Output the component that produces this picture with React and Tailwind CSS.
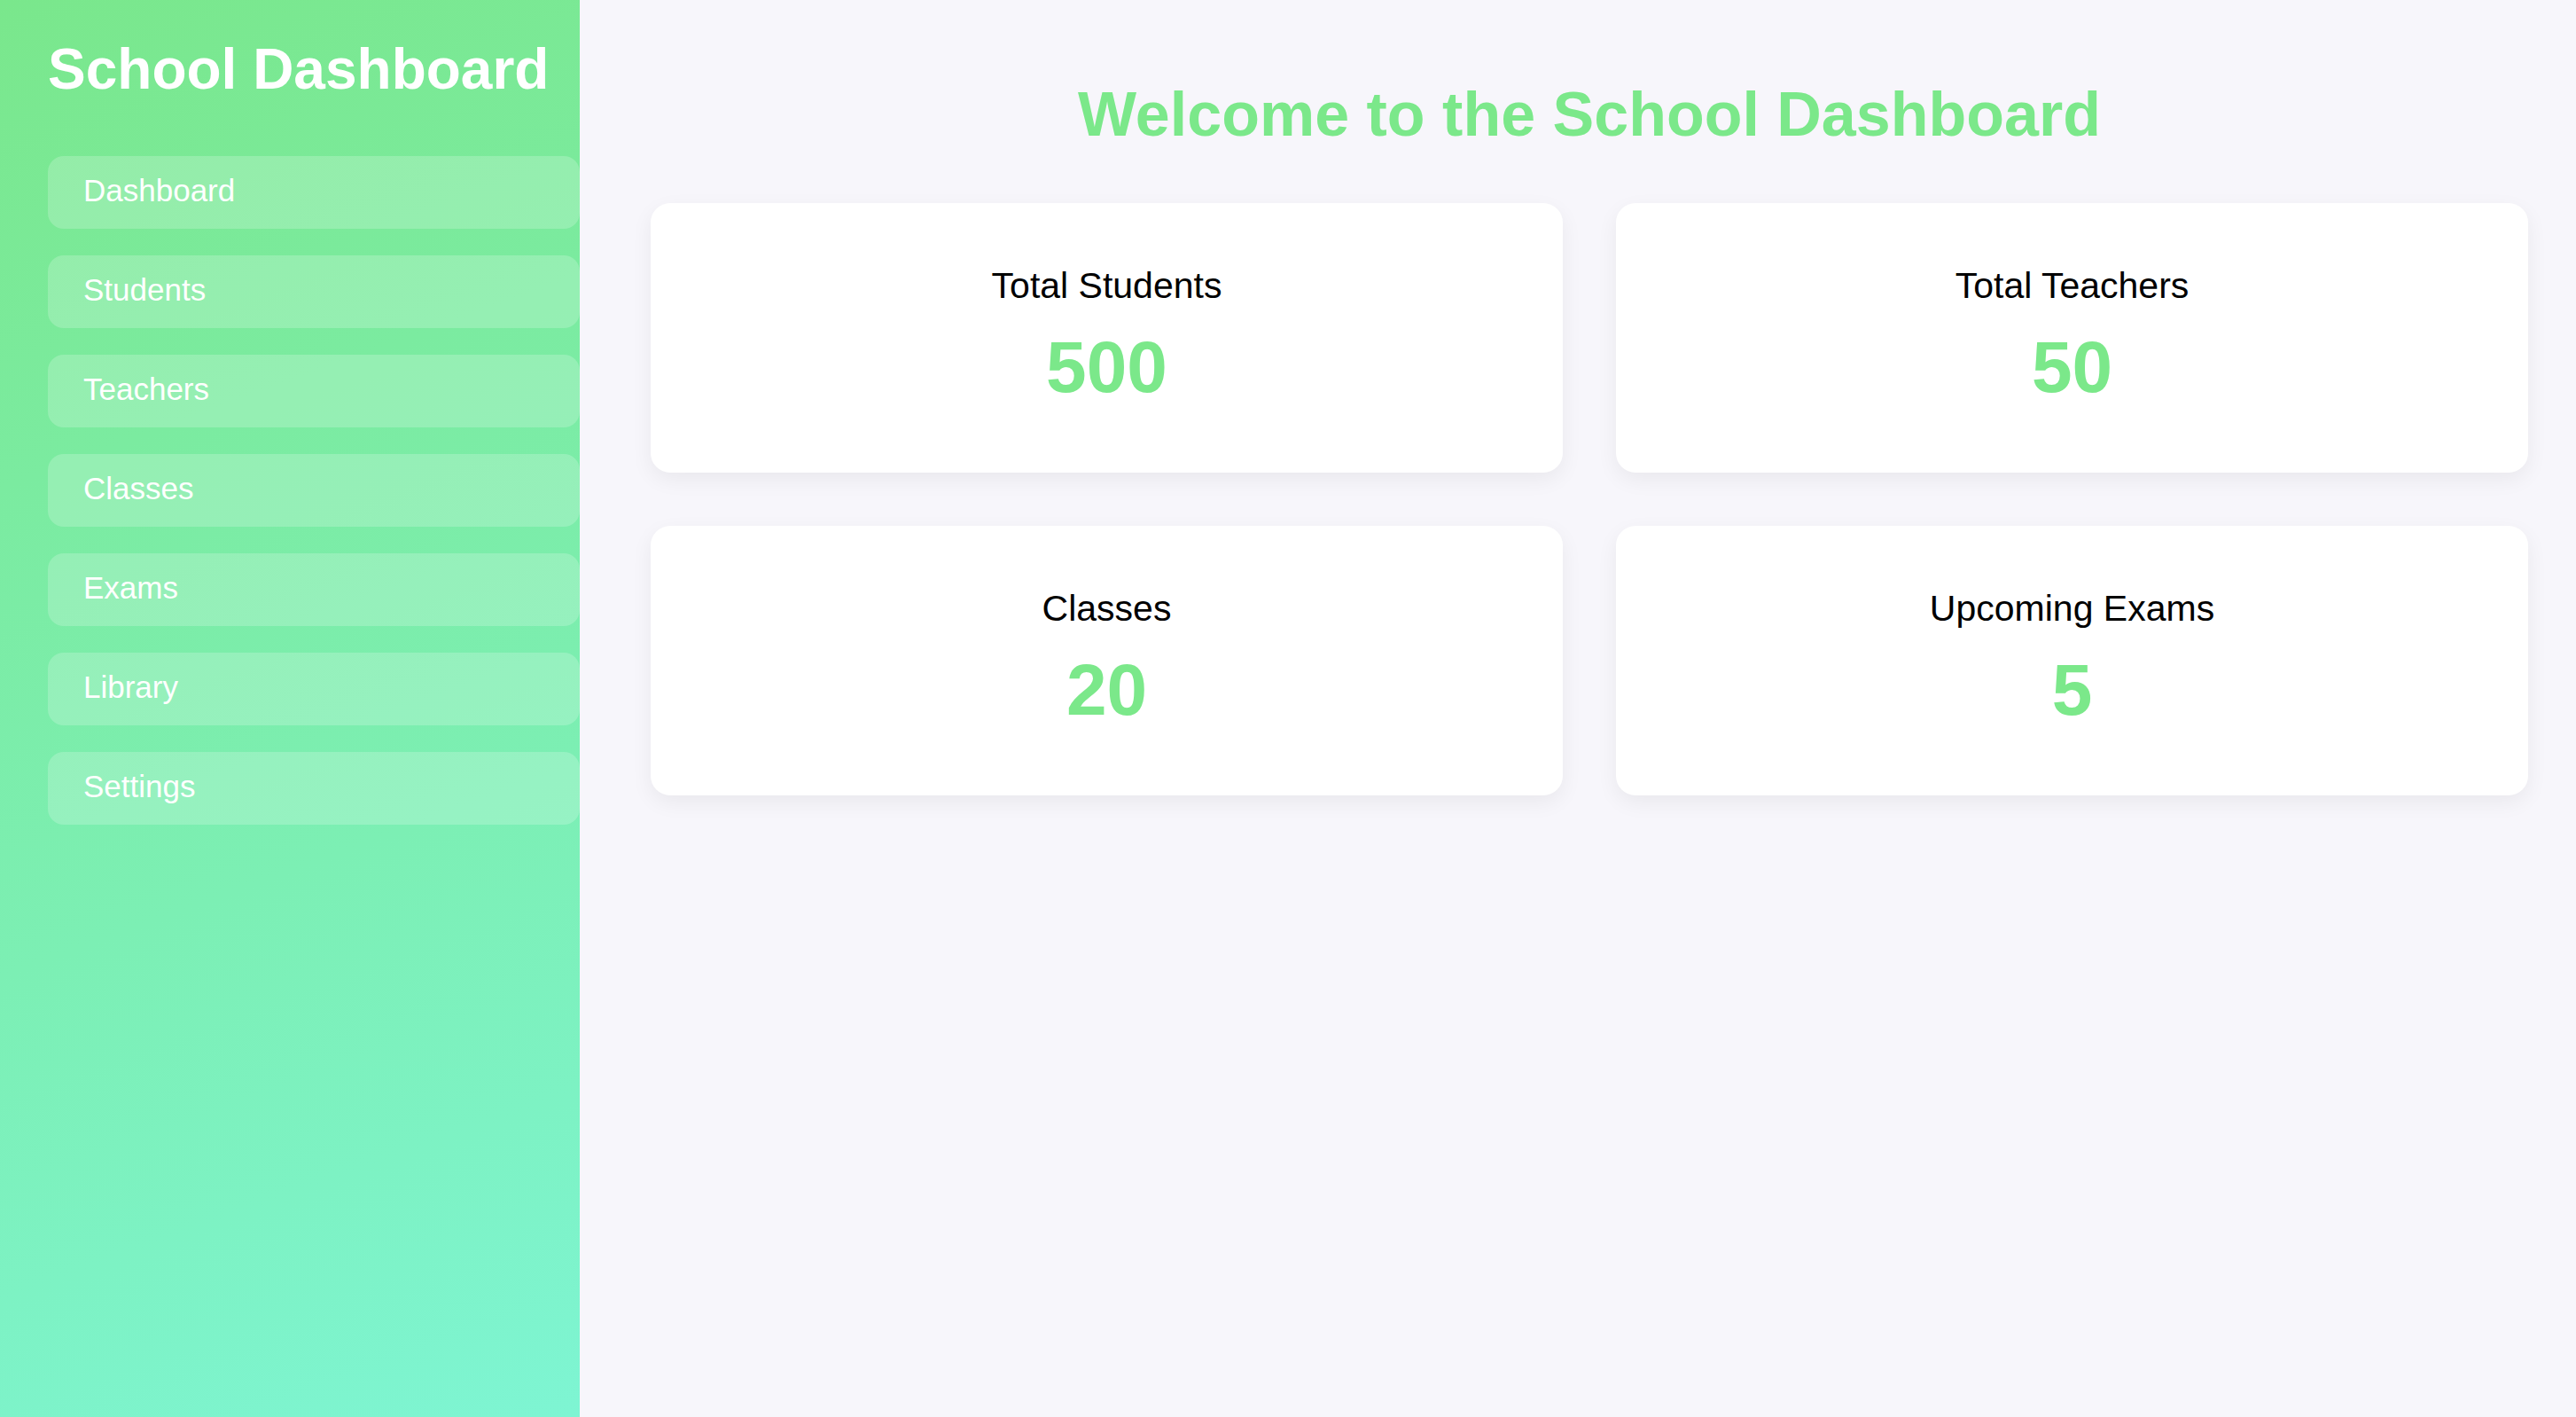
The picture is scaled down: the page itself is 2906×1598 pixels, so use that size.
const navItems = ["Dashboard", "Students", "Teachers", "Classes", "Exams", "Library", "Settings"];

const stats = [
	{ label: "Total Students", value: 500 },
	{ label: "Total Teachers", value: 50 },
	{ label: "Classes", value: 20 },
	{ label: "Upcoming Exams", value: 5 },
];

export default function App() {
	return (
		<div className="flex min-h-screen bg-[#f7f6fb] font-['Liberation_Sans',Arial,sans-serif]">
			<Sidebar/>
			<main className="flex-1 pl-[80px] pr-[54px] pt-[89px]">
				<h1 className="text-center text-[70px] leading-[81px] font-bold text-[#7be88a]">
					Welcome to the School Dashboard
				</h1>
				<div className="grid grid-cols-2 gap-[60px] mt-[59px]">
					{stats.map(s => (
						<StatCard key={s.label} {...s}/>
					))}
				</div>
			</main>
		</div>
	);
}

function Sidebar() {
	return (
		<aside className="w-[654px] shrink-0 min-h-screen pl-[54px] pt-[41px] bg-[linear-gradient(160deg,#7ae78c_0%,#7cefb4_60%,#7ef5d3_100%)]">
			<h2 className="text-[64px] leading-[74px] font-bold text-white">School Dashboard</h2>
			<nav className="flex flex-col gap-[30px] mt-[61px]">
				{navItems.map(item => (
					<a
						key={item}
						href="#"
						className="block h-[82px] pl-[40px] pt-[19px] text-[35px] leading-[40px] text-white bg-white/20 rounded-[18px]"
					>
						{item}
					</a>
				))}
			</nav>
		</aside>
	);
}

function StatCard({ label, value }) {
	return (
		<div className="h-[304px] pt-[70px] bg-white rounded-[22px] shadow-[0_8px_24px_rgba(0,0,0,0.06)] text-center">
			<h3 className="text-[41px] leading-[46px] text-black">{label}</h3>
			<p className="mt-[22px] text-[82px] leading-[94px] font-bold text-[#7be88a]">{value}</p>
		</div>
	);
}
